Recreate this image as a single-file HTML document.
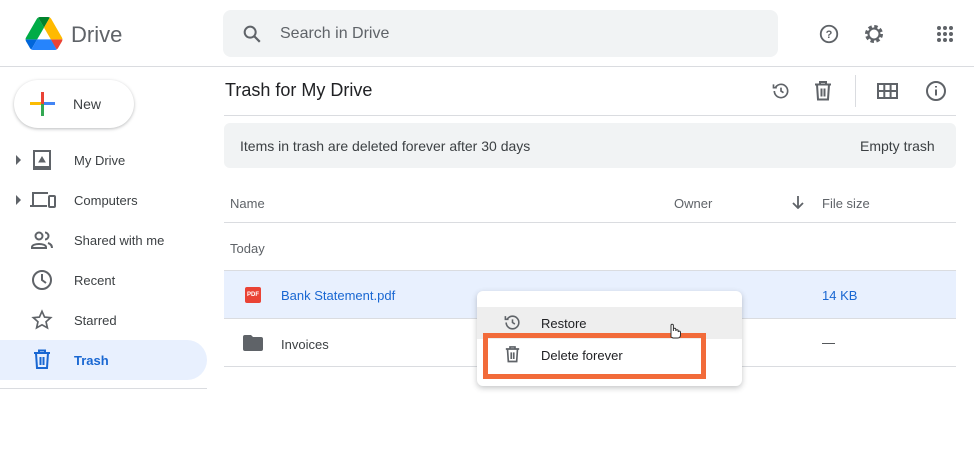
<!DOCTYPE html>
<html><head><style>
*{margin:0;padding:0;box-sizing:border-box}
body{width:974px;height:473px;background:#fff;font-family:"Liberation Sans",sans-serif;color:#3c4043;position:relative;overflow:hidden}
.a{position:absolute}
.t{font-size:13px;color:#3c4043}
</style></head><body>
<svg class="a" style="left:25px;top:17px" width="38" height="33" viewBox="0 0 87.3 78"><path d="M6.6 66.85l3.850 6.65c.8 1.4 1.95 2.5 3.3 3.3l13.75-23.8H0c0 1.55.4 3.1 1.2 4.5z" fill="#0066da"/><path d="M43.65 25L29.9 1.2c-1.35.8-2.5 1.9-3.3 3.3L1.2 48.5A9 9 0 000 53h27.5z" fill="#00ac47"/><path d="M73.55 76.8c1.35-.8 2.5-1.9 3.3-3.3l1.6-2.75 7.650-13.25c.8-1.4 1.2-2.95 1.2-4.5H59.8l5.85 11.5z" fill="#ea4335"/><path d="M43.65 25L57.4 1.2C56.05.4 54.5 0 52.9 0H34.4c-1.6 0-3.15.45-4.5 1.2z" fill="#00832d"/><path d="M59.8 53H27.5L13.75 76.8c1.35.8 2.9 1.2 4.5 1.2h50.8c1.6 0 3.15-.45 4.5-1.2z" fill="#2684fc"/><path d="M73.4 26.5L60.7 4.5c-.8-1.4-1.95-2.5-3.3-3.3L43.65 25 59.8 53h27.45c0-1.55-.4-3.1-1.2-4.5z" fill="#ffba00"/></svg>
<div class="a" style="left:71px;top:22px;font-size:22px;color:#5f6368">Drive</div>
<div class="a" style="left:223px;top:10px;width:555px;height:47px;background:#f1f3f4;border-radius:8px"></div>
<svg class="a" style="left:241px;top:23px" width="22" height="22" viewBox="0 0 24 24"><circle cx="10" cy="10" r="6" fill="none" stroke="#5f6368" stroke-width="2.2"/><path d="M14.5 14.5l6 6" stroke="#5f6368" stroke-width="2.4"/></svg>
<div class="a" style="left:280px;top:25px;font-size:16px;color:#5f6368">Search in Drive</div>
<svg class="a" style="left:818px;top:23px" width="22" height="22" viewBox="0 0 24 24"><circle cx="12" cy="12" r="9" fill="none" stroke="#5f6368" stroke-width="2"/><text x="12" y="16.5" font-size="12" font-weight="bold" text-anchor="middle" fill="#5f6368" font-family="Liberation Sans">?</text></svg>
<svg class="a" style="left:862px;top:22px" width="24" height="24" viewBox="0 0 24 24"><circle cx="12" cy="12" r="7" fill="none" stroke="#5f6368" stroke-width="4" stroke-dasharray="3.2 2.3"/><circle cx="12" cy="12" r="5.5" fill="none" stroke="#5f6368" stroke-width="2"/></svg>
<svg class="a" style="left:936px;top:25px" width="18" height="18" viewBox="0 0 18 18" fill="#5f6368"><circle cx="3" cy="3" r="2"/><circle cx="9" cy="3" r="2"/><circle cx="15" cy="3" r="2"/><circle cx="3" cy="9" r="2"/><circle cx="9" cy="9" r="2"/><circle cx="15" cy="9" r="2"/><circle cx="3" cy="15" r="2"/><circle cx="9" cy="15" r="2"/><circle cx="15" cy="15" r="2"/></svg>
<div class="a" style="left:0;top:66px;width:974px;height:1px;background:#dadce0"></div>
<div class="a" style="left:14px;top:80px;width:120px;height:48px;border-radius:24px;background:#fff;box-shadow:0 1px 3px rgba(60,64,67,.35)"></div>
<div class="a" style="left:41px;top:92px;width:3px;height:24px;background:#ea4335"></div>
<div class="a" style="left:41px;top:104px;width:3px;height:12px;background:#34a853"></div>
<div class="a" style="left:30px;top:102px;width:11px;height:3px;background:#fbbc04"></div>
<div class="a" style="left:44px;top:102px;width:11px;height:3px;background:#4285f4"></div>
<div class="a" style="left:73px;top:96px;font-size:14px;color:#3c4043">New</div>
<div class="a" style="left:16px;top:155px;width:0;height:0;border-left:5px solid #5f6368;border-top:5px solid transparent;border-bottom:5px solid transparent"></div>
<div class="a" style="left:16px;top:195px;width:0;height:0;border-left:5px solid #5f6368;border-top:5px solid transparent;border-bottom:5px solid transparent"></div>
<svg class="a" style="left:32px;top:150px" width="20" height="20" viewBox="0 0 20 20" fill="none" stroke="#5f6368" stroke-width="2"><rect x="2" y="1" width="16" height="16"/><path d="M1 19h18"/><path d="M7 12l3-5 3 5z" fill="#5f6368" stroke-width="1"/></svg>
<svg class="a" style="left:30px;top:190px" width="26" height="20" viewBox="0 0 26 20" fill="none" stroke="#5f6368" stroke-width="2"><path d="M3 15V3h15"/><path d="M0 16h17"/><rect x="19" y="6" width="6" height="11" rx="1"/></svg>
<svg class="a" style="left:31px;top:230px" width="22" height="20" viewBox="0 0 22 20" fill="none" stroke="#5f6368" stroke-width="2"><circle cx="8" cy="6" r="3.5"/><path d="M1 17c0-4 14-4 14 0v1H1z"/><path d="M14 2.5a3.5 3.5 0 010 7M17 13c3 1 4 3 4 5"/></svg>
<svg class="a" style="left:31px;top:269px" width="22" height="22" viewBox="0 0 22 22" fill="none" stroke="#5f6368" stroke-width="2"><circle cx="11" cy="11" r="9"/><path d="M11 5v6l4 3"/></svg>
<svg class="a" style="left:31px;top:309px" width="22" height="22" viewBox="0 0 24 24" fill="none" stroke="#5f6368" stroke-width="1.8"><path d="M12 2.5l2.8 6.300 6.7.6-5.1 4.5 1.5 6.7L12 17.2l-5.900 3.4 1.5-6.7-5.100-4.5 6.700-.6z"/></svg>
<div class="a" style="left:0;top:340px;width:207px;height:40px;background:#e8f0fe;border-radius:0 20px 20px 0"></div>
<svg class="a" style="left:33px;top:349px" width="18" height="20" viewBox="0 0 18 20" fill="none" stroke="#1967d2" stroke-width="2"><path d="M1 4h16M6 4V1.5h6V4M3 4l1 15h10l1-15M7.5 8v8M10.5 8v8"/></svg>
<div class="a t" style="left:74px;top:153px">My Drive</div>
<div class="a t" style="left:74px;top:193px">Computers</div>
<div class="a t" style="left:74px;top:233px">Shared with me</div>
<div class="a t" style="left:74px;top:273px">Recent</div>
<div class="a t" style="left:74px;top:313px">Starred</div>
<div class="a t" style="left:74px;top:353px;color:#1967d2;font-weight:bold">Trash</div>
<div class="a" style="left:0;top:388px;width:207px;height:1px;background:#dadce0"></div>
<div class="a" style="left:225px;top:80px;font-size:18px;color:#202124">Trash for My Drive</div>
<svg class="a" style="left:771px;top:81px" width="20" height="20" viewBox="0 0 24 24" fill="none" stroke="#5f6368" stroke-width="2"><path d="M4 12a8 8 0 108-8c-3 0-5 1.5-6.5 3.5"/><path d="M3 4v4h4"/><path d="M12 8v4l3 2"/></svg>
<svg class="a" style="left:814px;top:80px" width="18" height="21" viewBox="0 0 18 20" fill="none" stroke="#5f6368" stroke-width="2"><path d="M1 4h16M6 4V1.5h6V4M3 4l1 15h10l1-15M7.5 8v8M10.5 8v8"/></svg>
<div class="a" style="left:855px;top:75px;width:1px;height:32px;background:#dadce0"></div>
<svg class="a" style="left:877px;top:83px" width="21" height="16" viewBox="0 0 21 16" fill="none" stroke="#5f6368" stroke-width="2"><rect x="1" y="1" width="19" height="14"/><path d="M1 8h19M7.3 1v14M13.6 1v14"/></svg>
<svg class="a" style="left:925px;top:80px" width="22" height="22" viewBox="0 0 22 22" fill="none" stroke="#5f6368" stroke-width="2"><circle cx="11" cy="11" r="9"/><path d="M11 9.5v6M11 6v1.5"/></svg>
<div class="a" style="left:224px;top:115px;width:732px;height:1px;background:#dadce0"></div>
<div class="a" style="left:224px;top:123px;width:732px;height:45px;background:#f1f3f4;border-radius:6px"></div>
<div class="a" style="left:240px;top:138px;font-size:14px;color:#3c4043">Items in trash are deleted forever after 30 days</div>
<div class="a" style="left:860px;top:138px;font-size:14px;color:#3c4043">Empty trash</div>
<div class="a t" style="left:230px;top:196px;color:#5f6368">Name</div>
<div class="a t" style="left:674px;top:196px;color:#5f6368">Owner</div>
<svg class="a" style="left:791px;top:195px" width="14" height="14" viewBox="0 0 14 14" fill="none" stroke="#5f6368" stroke-width="1.8"><path d="M7 1v12M2 8l5 5 5-5"/></svg>
<div class="a t" style="left:822px;top:196px;color:#5f6368">File size</div>
<div class="a" style="left:224px;top:222px;width:732px;height:1px;background:#dadce0"></div>
<div class="a t" style="left:230px;top:241px;color:#5f6368">Today</div>
<div class="a" style="left:224px;top:270px;width:732px;height:1px;background:#dadce0"></div>
<div class="a" style="left:224px;top:271px;width:732px;height:47px;background:#e8f0fe"></div>
<div class="a" style="left:245px;top:287px;width:16px;height:16px;background:#ea4335;border-radius:2px;color:#fff;font-size:6px;font-weight:bold;text-align:center;line-height:16px">PDF</div>
<div class="a t" style="left:281px;top:288px;color:#1967d2">Bank Statement.pdf</div>
<div class="a t" style="left:822px;top:288px;color:#1967d2">14 KB</div>
<div class="a" style="left:224px;top:318px;width:732px;height:1px;background:#dadce0"></div>
<svg class="a" style="left:243px;top:335px" width="20" height="16" viewBox="0 0 20 16" fill="#5f6368"><path d="M0 2a2 2 0 012-2h6l2 2h8a2 2 0 012 2v10a2 2 0 01-2 2H2a2 2 0 01-2-2z"/></svg>
<div class="a t" style="left:281px;top:337px">Invoices</div>
<div class="a t" style="left:822px;top:335px">—</div>
<div class="a" style="left:224px;top:366px;width:732px;height:1px;background:#dadce0"></div>
<div class="a" style="left:477px;top:291px;width:265px;height:95px;background:#fff;border-radius:6px;box-shadow:0 2px 6px rgba(60,64,67,.3)"></div>
<div class="a" style="left:477px;top:307px;width:265px;height:32px;background:#eeeeee"></div>
<svg class="a" style="left:503px;top:313px" width="19" height="19" viewBox="0 0 24 24" fill="none" stroke="#5f6368" stroke-width="2"><path d="M4 12a8 8 0 108-8c-3 0-5 1.5-6.5 3.5"/><path d="M3 4v4h4"/><path d="M12 8v4l3 2"/></svg>
<div class="a t" style="left:541px;top:316px;color:#202124">Restore</div>
<div class="a" style="left:483px;top:333px;width:223px;height:46px;border:5px solid #f26b3a"></div>
<svg class="a" style="left:505px;top:345px" width="15" height="18" viewBox="0 0 18 20" fill="none" stroke="#5f6368" stroke-width="2"><path d="M1 4h16M6 4V1.5h6V4M3 4l1 15h10l1-15M7.5 8v8M10.5 8v8"/></svg>
<div class="a t" style="left:541px;top:348px;color:#202124">Delete forever</div>
<svg class="a" style="left:667px;top:323px" width="14" height="16" viewBox="0 0 14 16" fill="#fff" stroke="#333" stroke-width="1"><path d="M4 14V2.5a1.2 1.2 0 012.4 0V8V6.5a1.2 1.2 0 012.4 0V8a1.2 1.2 0 012.4 0v1a1.2 1.2 0 012.3 0V12c0 2-1 3-3 3H6z"/></svg>
</body></html>
